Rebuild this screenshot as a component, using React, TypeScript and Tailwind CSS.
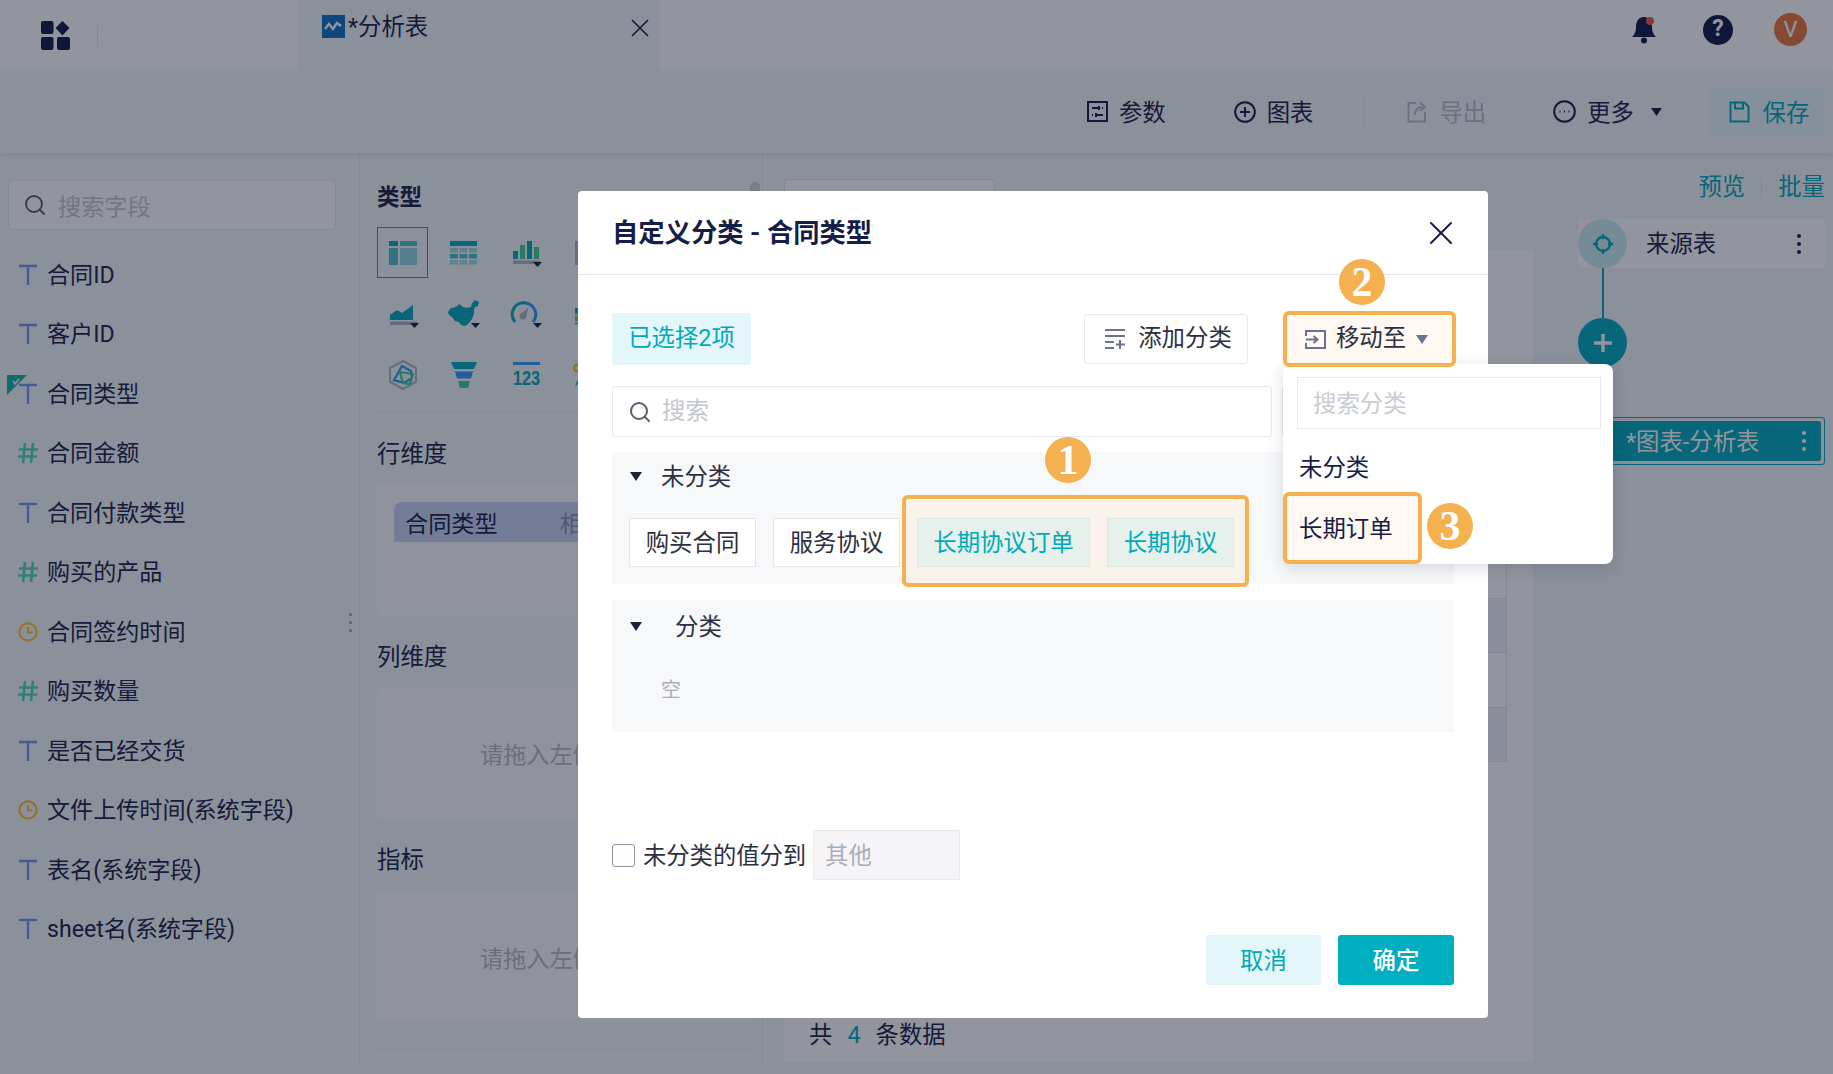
import React from 'react';
import { X, Search } from 'lucide-react';

const teal = '#00a9bc';

const fields = [
  { type: 't', name: '合同ID' },
  { type: 't', name: '客户ID' },
  { type: 't', name: '合同类型', used: true },
  { type: 'n', name: '合同金额' },
  { type: 't', name: '合同付款类型' },
  { type: 'n', name: '购买的产品' },
  { type: 'd', name: '合同签约时间' },
  { type: 'n', name: '购买数量' },
  { type: 't', name: '是否已经交货' },
  { type: 'd', name: '文件上传时间(系统字段)' },
  { type: 't', name: '表名(系统字段)' },
  { type: 't', name: 'sheet名(系统字段)' },
];

const FieldIcon = ({ type }: { type: string }) => {
  if (type === 'n') {
    return (
      <svg width="22" height="22" viewBox="0 0 22 22" fill="none" stroke="#4fd8b8" strokeWidth="2.6">
        <path d="M8 1 6 21M16 1l-2 20M2 7.500h19M1 14.500h19" />
      </svg>
    );
  }
  if (type === 'd') {
    return (
      <svg width="20" height="20" viewBox="0 0 20 20" fill="none" stroke="#ffc030" strokeWidth="2.2">
        <circle cx="10" cy="10" r="8.600" />
        <path d="M10 5v5.500h4.500" />
      </svg>
    );
  }
  return (
    <svg width="20" height="22" viewBox="0 0 20 22" fill="none" stroke="#7096f0" strokeWidth="2.4">
      <path d="M1 2h18M10 2v19" />
    </svg>
  );
};

const Caret = () => <path d="M24 24h9l-4.500 5z" fill="#161d47" />;

const ChartIcon = ({ kind }: { kind: number }) => {
  const c = teal;
  return (
    <svg width="34" height="30" viewBox="0 0 34 30">
      {kind === 0 && (
        <g transform="translate(3 3)" fill={c}>
          <rect width="9" height="5" />
          <rect x="11" width="17" height="5" opacity=".7" />
          <rect y="7" width="9" height="17" opacity=".7" />
          <rect x="11" y="7" width="17" height="17" opacity=".4" />
        </g>
      )}
      {kind === 1 && (
        <g transform="translate(3 3)" fill={c}>
          <rect width="27" height="5" />
          {[7, 13, 19].map((y, i) => (
            <g key={y} opacity={i === 1 ? 0.7 : 0.35}>
              <rect y={y} width="8" height="4.500" />
              <rect x="9.500" y={y} width="8" height="4.500" />
              <rect x="19" y={y} width="8" height="4.500" />
            </g>
          ))}
        </g>
      )}
      {kind === 2 && (
        <g>
          <rect x="4" y="13" width="5" height="8" fill={c} />
          <rect x="11" y="7" width="5" height="14" fill="#3fd08f" />
          <rect x="18" y="3" width="5" height="18" fill={c} />
          <rect x="25" y="9" width="5" height="12" fill="#3fd08f" />
          <rect x="4" y="22.500" width="27" height="3.500" fill="#aeb2c4" />
          <Caret />
        </g>
      )}
      {kind === 3 && (
        <g>
          <path d="M4 16l7-5 5 3 11-8v15H4z" fill={c} />
          <rect x="4" y="22.500" width="27" height="3.500" fill="#aeb2c4" />
          <Caret />
        </g>
      )}
      {kind === 4 && (
        <g>
          <path d="M1 13l3-4 5-1 3-3 4 3 4 1 4-1 1-4 3-3 4 2-1 4-3 1-1 3v4l-2 5-3 4-4 3-4-1-2-3-4-1-3-4-3-2z" fill={c} />
          <Caret />
        </g>
      )}
      {kind === 5 && (
        <g fill="none">
          <path d="M6.200 23A11.500 11.500 0 0 1 18 4.200" stroke={c} strokeWidth="3" />
          <path d="M18 4.200A11.500 11.500 0 0 1 23.800 23" stroke="#2f9bf5" strokeWidth="3" />
          <circle cx="14" cy="17" r="3.500" fill="#aeb2c4" />
          <path d="M12 15l8-7-4 11z" fill="#aeb2c4" />
          <Caret />
        </g>
      )}
      {kind === 6 && (
        <g fill="none">
          <path d="M17 1l13 7v14l-13 7-13-7V8z" stroke="#aeb2c4" strokeWidth="2" />
          <path d="M16 6l9 5 1 7-8 5-10-3z" stroke="#2f9bf5" strokeWidth="2.200" />
          <path d="M14 12l13 2-3 10-7-1z" stroke="#3fd08f" strokeWidth="2.200" />
        </g>
      )}
      {kind === 7 && (
        <g>
          <path d="M4 2h26l-3 7H7z" fill={c} />
          <path d="M8 11.500h18l-2 7H10z" fill="#2f9bf5" />
          <path d="M11 21h12l-2 7h-8z" fill="#3fd08f" />
        </g>
      )}
      {kind === 8 && (
        <g>
          <rect x="4" y="2" width="27" height="3" fill="#2f9bf5" />
          <text x="17.500" y="25" textAnchor="middle" fontSize="21" fontWeight="700" fill={c} fontFamily="'Liberation Sans', sans-serif" textLength="27" lengthAdjust="spacingAndGlyphs">
            123
          </text>
        </g>
      )}
      {kind === 9 && <rect x="5" y="3" width="3" height="24" fill="#aeb2c4" />}
      {kind === 10 && (
        <g>
          <rect x="5" y="9" width="6" height="5" fill={c} />
          <rect x="5" y="14" width="6" height="4" fill="#ffc030" />
          <rect x="5" y="18" width="6" height="4" fill="#3fd08f" />
          <rect x="5" y="23" width="6" height="3" fill="#aeb2c4" />
        </g>
      )}
      {kind === 11 && (
        <g>
          <circle cx="7" cy="8" r="3" fill="none" stroke="#ffc030" strokeWidth="2.500" />
          <path d="M5 27l2-6 3 0z" fill={c} />
        </g>
      )}
    </svg>
  );
};

const ToolItem = ({ icon, label, dim, caret }: { icon: React.ReactNode; label: string; dim?: boolean; caret?: boolean }) => (
  <div className={`flex items-center gap-[11px] text-[23.4px] ${dim ? 'text-[#b9bdc9]' : 'text-[#1a2145]'}`}>
    {icon}
    <span className="pt-[3px]">{label}</span>
    {caret && (
      <svg width="13" height="10" viewBox="0 0 13 10" className="ml-[5px]">
        <path d="M1 1h11L6.500 9z" fill="#161d47" />
      </svg>
    )}
  </div>
);

const Badge = ({ n, className }: { n: number; className: string }) => (
  <div
    className={`absolute z-30 flex h-[46px] w-[46px] items-center justify-center rounded-full bg-[#f5b04f] font-['Liberation_Serif',serif] text-[42px] font-bold leading-none text-white ${className}`}
  >
    {n}
  </div>
);

const Triangle = () => (
  <svg width="14" height="11" viewBox="0 0 14 11" className="shrink-0">
    <path d="M1 1h12L7 10z" fill="#1f2433" />
  </svg>
);

const Chip = ({ label, active, className }: { label: string; active?: boolean; className: string }) => (
  <div
    className={`relative z-10 flex h-[49px] items-center justify-center border pt-[2px] text-[23.4px] ${className} ${
      active ? 'border-[#dce9e4] bg-[#e5f1ea] text-[#00a9bc]' : 'border-[#e6e7ec] bg-white text-[#2d3040]'
    }`}
  >
    {label}
  </div>
);

const DropBox = ({ top }: { top: string }) => (
  <div className={`${top} flex h-[130px] w-[378px] items-center rounded-[4px] bg-[#fbfbfc] pl-[103px] pt-[4px] text-[23.2px] whitespace-nowrap text-[#b5b8c4]`}>
    请拖入左侧字段
  </div>
);

export default function App() {
  return (
    <div className="relative h-[1074px] w-[1833px] overflow-hidden bg-[#f0f7f9] font-[Roboto,'Noto_Sans_CJK_SC',sans-serif] text-[#1a2145]">
      {/* top bar */}
      <div className="flex h-[71px] bg-white">
        <div className="flex w-[297px] items-center pl-[41px]">
          <svg width="29" height="29" viewBox="0 0 29 29" fill="#0e1848">
            <rect width="12.500" height="13" rx="2" />
            <path d="M21.500 0l7 7-7 7.500-7-7.500z" />
            <rect y="16" width="12.500" height="13" rx="2" />
            <rect x="16" y="16" width="13" height="13" rx="2" />
          </svg>
          <div className="ml-[27px] h-[20px] w-px bg-[#e4e6ec]" />
        </div>
        <div className="flex w-[363px] items-start bg-[#f0f7f9] pl-[25px] pt-[12px]">
          <svg width="23" height="23" viewBox="0 0 23 23" className="mt-[3px]">
            <rect width="23" height="23" fill="#0f6fc0" />
            <path d="M3 14l4-5 4 5 4-6 4 3" fill="none" stroke="#fff" strokeWidth="2.400" />
          </svg>
          <span className="ml-[3px] text-[23.4px] leading-[30px]">*分析表</span>
          <X className="ml-auto mr-[5px] mt-[1px] h-[30px] w-[30px]" strokeWidth={1.4} />
        </div>
        <div className="ml-auto flex items-center pb-[12px] pr-[26px]">
          <svg width="26" height="29" viewBox="0 0 26 29" fill="#0e1848">
            <path d="M13 2c-5 0-8 4-8 10 0 4-1 7-4 10h24c-3-3-4-6-4-10 0-6-3-10-8-10z" />
            <circle cx="13" cy="25.500" r="3" />
            <circle cx="19" cy="6" r="4" fill="#ea5b50" />
          </svg>
          <div className="ml-[46px] flex h-[30px] w-[30px] items-center justify-center rounded-full bg-[#0e1848] text-[23px] font-bold text-white">
            ?
          </div>
          <div className="ml-[41px] flex h-[33px] w-[33px] items-center justify-center rounded-full bg-[#e8773f] text-[22px] text-white">
            V
          </div>
        </div>
      </div>

      {/* toolbar */}
      <div className="relative z-10 flex h-[82px] items-center justify-end bg-[#f0f7f9] pr-[8px] shadow-[0_2px_6px_rgba(30,40,70,0.08)]">
        <ToolItem
          label="参数"
          icon={
            <svg width="21" height="21" viewBox="0 0 21 21" fill="none" stroke="#161d47" strokeWidth="2">
              <rect x="1" y="1" width="19" height="19" />
              <path d="M5 7h7M15 7h1M5 14h1M9 14h7" />
              <path d="M12 5v4M9 12v4" />
            </svg>
          }
        />
        <div className="ml-[68px]">
          <ToolItem
            label="图表"
            icon={
              <svg width="22" height="22" viewBox="0 0 22 22" fill="none" stroke="#161d47" strokeWidth="2">
                <circle cx="11" cy="11" r="9.800" />
                <path d="M11 6v10M6 11h10" />
              </svg>
            }
          />
        </div>
        <div className="ml-[50px] h-[30px] w-px bg-[#e4e8ec]" />
        <div className="ml-[43px]">
          <ToolItem
            dim
            label="导出"
            icon={
              <svg width="21" height="23" viewBox="0 0 21 23" fill="none" stroke="#b9bdc9" strokeWidth="2">
                <path d="M9 3H1.500v18.500H18V12" />
                <path d="M8 15c0-5 3-8 8-8M13 2.500 18 7l-5 4" />
              </svg>
            }
          />
        </div>
        <div className="ml-[67px]">
          <ToolItem
            caret
            label="更多"
            icon={
              <svg width="23" height="23" viewBox="0 0 23 23" fill="none" stroke="#161d47" strokeWidth="2">
                <circle cx="11.500" cy="11.500" r="10.300" />
                <path d="M6.500 11.500h1M11 11.500h1M15.500 11.500h1" />
              </svg>
            }
          />
        </div>
        <div className="ml-[46px] flex h-[47px] w-[116px] items-center justify-center gap-[13px] rounded-[3px] bg-[#e3f6f9] pl-[4px] text-[23.4px] text-[#00a9bc]">
          <svg width="21" height="22" viewBox="0 0 21 22" fill="none" stroke="#00a9bc" strokeWidth="2">
            <path d="M1.500 1.500h14l4 4v15h-18z" />
            <path d="M6 1.500v6h8v-6" />
          </svg>
          <span className="pt-[3px]">保存</span>
        </div>
      </div>

      {/* workspace */}
      <div className="flex h-[921px]">
        {/* field list */}
        <div className="relative h-[911px] w-[360px] shrink-0 border-r border-[#e5e9ee] pl-[8px] pr-[23px] pt-[27px]">
          <div className="flex h-[50px] items-center gap-[11px] rounded-[4px] border border-[#e8ebf0] bg-white pl-[14px] text-[23.2px] text-[#c3c6d0]">
            <Search className="h-[24px] w-[24px] text-[#5a6070]" strokeWidth={2} />
            <span className="pt-[4px]">搜索字段</span>
          </div>
          <div className="mt-[15px]">
            {fields.map((f) => (
              <div key={f.name} className="relative flex h-[59.5px] items-center whitespace-nowrap text-[23.1px]">
                {f.used && (
                  <svg width="20" height="20" viewBox="0 0 20 20" className="absolute -left-px top-[11px]">
                    <path d="M0 0h20L0 20z" fill="#0fb8a0" />
                    <path d="M6 6l2 3 4-5" fill="none" stroke="#fff" strokeWidth="1.500" />
                  </svg>
                )}
                <div className="flex w-[39px] justify-center">
                  <FieldIcon type={f.type} />
                </div>
                <span className="pt-[3px]">{f.name}</span>
              </div>
            ))}
          </div>
          <div className="absolute left-[349px] top-[460px] flex flex-col gap-[5px]">
            <div className="h-[3px] w-[3px] rounded-full bg-[#9a9eae]" />
            <div className="h-[3px] w-[3px] rounded-full bg-[#9a9eae]" />
            <div className="h-[3px] w-[3px] rounded-full bg-[#9a9eae]" />
          </div>
        </div>

        {/* chart config */}
        <div className="relative h-[911px] w-[403px] shrink-0 border-r border-[#e5e9ee] pl-[17px] pt-[28px]">
          <div className="h-[30px] pt-[1px] text-[22.5px] font-bold leading-[30px]">类型</div>
          <div className="mt-[16px] grid w-[246px] grid-cols-4 gap-y-[10px]">
            {[0, 1, 2, 9, 3, 4, 5, 10, 6, 7, 8, 11].map((k) => (
              <div
                key={k}
                className={`flex h-[51px] w-[51px] items-center justify-center ${k === 0 ? 'border border-[#00a9bc]' : ''}`}
              >
                <ChartIcon kind={k} />
              </div>
            ))}
          </div>
          <div className="mr-[8px] mt-[11px] border-t border-[#e5e9ee]" />
          <div className="mt-[27px] h-[30px] text-[23.4px] leading-[30px]">行维度</div>
          <div className="mt-[16px] h-[131px] w-[378px] rounded-[4px] bg-[#fbfbfc] pl-[17px] pt-[17px]">
            <div className="flex h-[40px] w-[360px] items-center rounded-tl-[8px] bg-[#c5d4f2] pl-[11px] pt-[4px] text-[23.2px]">
              合同类型
              <span className="ml-[62px] text-[#8a93ad]">相</span>
            </div>
          </div>
          <div className="mt-[26px] h-[30px] text-[23.4px] leading-[30px]">列维度</div>
          <DropBox top="mt-[16px]" />
          <div className="mt-[27px] h-[30px] text-[23.4px] leading-[30px]">指标</div>
          <DropBox top="mt-[17px]" />
          <div className="mr-[8px] mt-[27px] border-t border-[#e5e9ee]" />
          <div className="absolute left-[390px] top-[29px] h-[60px] w-[10px] rounded-full bg-[#d0d3da]" />
        </div>

        {/* preview area */}
        <div className="w-[790px] shrink-0 pl-[21px] pr-[20px] pt-[26px]">
          <div className="h-[71px] w-[211px] rounded-t-[4px] border border-b-0 border-[#dfe3ea] bg-white" />
          <div className="relative h-[812px] bg-white">
            <div className="ml-[25px] mr-[26px] pt-[294px]">
              {[0, 1, 2, 3].map((i) => (
                <div
                  key={i}
                  className={`h-[54.5px] border-b border-r border-[#e3e6ec] ${i % 2 === 0 ? 'bg-white' : 'bg-[#eef1f7]'}`}
                />
              ))}
            </div>
            <div className="absolute bottom-[9px] left-[25px] flex items-center text-[23.4px]">
              共<span className="mx-[15px] text-[#00a9bc]">4</span>条数据
            </div>
          </div>
        </div>

        {/* flow panel */}
        <div className="flex-1 pl-[25px] pr-[8px]">
          <div className="flex h-[66px] items-center justify-end pt-[3px] text-[23.4px] text-[#00a9bc]">
            预览
            <div className="mx-[16px] h-[20px] w-px bg-[#dde3e8]" />
            批量
          </div>
          <div className="flex h-[49px] items-center rounded-[3px] bg-white pr-[24px]">
            <div className="flex h-[49px] w-[49px] items-center justify-center rounded-full bg-[#c9eef2]">
              <svg width="22" height="22" viewBox="0 0 22 22" fill="none" stroke="#00a9bc" strokeWidth="2.400">
                <circle cx="11" cy="11" r="7" />
                <path d="M11 1v5M11 16v5M1 11h5M16 11h5" />
              </svg>
            </div>
            <span className="ml-[19px] pt-[3px] text-[23.4px]">来源表</span>
            <div className="ml-auto flex flex-col gap-[4px]">
              <div className="h-[4px] w-[4px] rounded-full bg-[#161d47]" />
              <div className="h-[4px] w-[4px] rounded-full bg-[#161d47]" />
              <div className="h-[4px] w-[4px] rounded-full bg-[#161d47]" />
            </div>
          </div>
          <div className="ml-[24px] h-[50px] w-[2px] bg-[#00a9bc]" />
          <div className="flex h-[49px] w-[49px] items-center justify-center rounded-full bg-[#00a9bc]">
            <svg width="22" height="22" viewBox="0 0 22 22" stroke="#fff" strokeWidth="3.400">
              <path d="M11 2v18M2 11h18" />
            </svg>
          </div>
          <div className="mt-[50px] h-[48px] rounded-[3px] border border-[#00a9bc] p-[3px]">
            <div className="flex h-full items-center rounded-[3px] bg-[#00a9bc] pl-[44px] pr-[15px] text-[23.4px] text-white">
              <span className="pt-[3px]">*图表-分析表</span>
              <div className="ml-auto flex flex-col gap-[4px]">
                <div className="h-[4px] w-[4px] rounded-full bg-white" />
                <div className="h-[4px] w-[4px] rounded-full bg-white" />
                <div className="h-[4px] w-[4px] rounded-full bg-white" />
              </div>
            </div>
          </div>
        </div>
      </div>

      {/* mask */}
      <div className="absolute inset-0 z-20 bg-[#0f1428]/45" />

      {/* dialog */}
      <div className="absolute left-[578px] top-[191px] z-30 h-[827px] w-[910px] rounded-[4px] bg-white">
        <div className="flex h-[84px] items-center justify-between border-b border-[#e4e5eb] pl-[34px] pr-[27px]">
          <h3 className="pt-[3px] text-[26.3px] font-bold text-[#161d47]">自定义分类 - 合同类型</h3>
          <X className="h-[40px] w-[40px] text-[#161d47]" strokeWidth={1.2} />
        </div>

        <div className="px-[34px]">
          <div className="mt-[38px] flex h-[52px] items-center">
            <div className="flex h-[52px] w-[139px] items-center justify-center rounded-[3px] bg-[#e3f6f9] text-[23.4px] text-[#00a9bc]">
              已选择2项
            </div>
            <div className="ml-auto flex h-[50px] w-[164px] items-center justify-center gap-[12px] rounded-[3px] border border-[#e9eaef] pl-[4px] text-[23.4px] text-[#2d3040]">
              <svg width="22" height="22" viewBox="0 0 22 22" fill="none" stroke="#6d7290" strokeWidth="2.200">
                <path d="M1 2h20M1 8h20M1 14h9M1 20h9M16 12v9M12 16.500h9" />
              </svg>
              添加分类
            </div>
            <div className="relative z-30 -mr-[2px] ml-[35px] flex h-[56px] w-[173px] items-center justify-center gap-[10px] rounded-[6px] border-[4px] border-[#f5b04f] bg-[#fff8f3] pr-[6px] text-[23.4px] text-[#2d3040]">
              <svg width="21" height="19" viewBox="0 0 21 19" fill="none" stroke="#6d7290" strokeWidth="2">
                <path d="M1 6V1h19v17H1v-5" />
                <path d="M1 9.500h11M8.500 6l4 3.500-4 3.500" />
              </svg>
              移动至
              <svg width="12" height="9" viewBox="0 0 12 9">
                <path d="M0 0h12L6 9z" fill="#6d7290" />
              </svg>
            </div>
          </div>

          <div className="mt-[21px] flex h-[51px] gap-[10px]">
            <div className="flex w-[660px] items-center gap-[10px] rounded-[3px] border border-[#e9eaef] pl-[15px] text-[23.4px] text-[#c4c6d0]">
              <Search className="h-[24px] w-[24px] text-[#5a6070]" strokeWidth={2} />
              搜索
            </div>
            <div className="w-[172px] rounded-[3px] border border-[#e9eaef]" />
          </div>

          <div className="relative mt-[15px] h-[132px] bg-[#f7f8fa] pl-[17px]">
            <div className="flex h-[48px] items-center gap-[18px] text-[23.4px] text-[#2d3040]">
              <Triangle />
              <span className="pt-[3px]">未分类</span>
            </div>
            <div className="mt-[18px] flex gap-[17px]">
              <Chip label="购买合同" className="w-[127px]" />
              <Chip label="服务协议" className="w-[127px]" />
              <Chip label="长期协议订单" active className="w-[173px]" />
              <Chip label="长期协议" active className="w-[127px]" />
            </div>
            <div className="absolute left-[290px] top-[43px] h-[92px] w-[347px] rounded-[6px] border-[4px] border-[#f5b04f] bg-[#f9f3ec]" />
          </div>

          <div className="mt-[16px] h-[132px] bg-[#f7f8fa] pl-[17px]">
            <div className="flex h-[52px] items-center gap-[32px] text-[23.4px] text-[#2d3040]">
              <Triangle />
              <span className="pt-[3px]">分类</span>
            </div>
            <div className="ml-[32px] mt-[25px] text-[20px] leading-[26px] text-[#a9adba]">空</div>
          </div>

          <div className="mt-[98px] flex h-[50px] items-center">
            <div className="h-[23px] w-[23px] rounded-[3px] border border-[#8e93a6] bg-white" />
            <span className="ml-[8px] pt-[3px] text-[23.3px] text-[#2d3040]">未分类的值分到</span>
            <div className="ml-[7px] flex h-[50px] w-[147px] items-center border border-[#e9eaef] bg-[#f5f5f7] pl-[11px] pt-[3px] text-[23.4px] text-[#a9adba]">
              其他
            </div>
          </div>

          <div className="mt-[55px] flex justify-end gap-[17px]">
            <div className="flex h-[50px] w-[115px] items-center justify-center rounded-[3px] bg-[#e3f6f9] pt-[3px] text-[23.4px] text-[#00a9bc]">
              取消
            </div>
            <div className="flex h-[50px] w-[116px] items-center justify-center rounded-[3px] bg-[#00aec1] pt-[3px] text-[23.4px] font-medium text-white">
              确定
            </div>
          </div>
        </div>

        {/* move-to menu */}
        <div className="absolute left-[705px] top-[173px] z-20 h-[200px] w-[330px] rounded-[8px] bg-white pt-[13px] shadow-[0_4px_16px_rgba(20,30,60,0.16)]">
          <div className="mx-[14px] flex h-[52px] w-[304px] items-center border border-[#e9eaef] pl-[15px] pt-[4px] text-[23.4px] text-[#c9cbd5]">
            搜索分类
          </div>
          <div className="flex h-[63px] items-center pl-[16px] pt-[16px] text-[23.4px] text-[#161d47]">未分类</div>
          <div className="flex h-[72px] w-[139px] items-center rounded-[6px] border-[4px] border-[#f5b04f] bg-[#fff8f3] pl-[12px] pt-[3px] text-[23.4px] text-[#161d47]">
            长期订单
          </div>
        </div>

        <Badge n={1} className="left-[467px] top-[246px]" />
        <Badge n={2} className="left-[761px] top-[68px]" />
        <Badge n={3} className="left-[849px] top-[312px]" />
      </div>
    </div>
  );
}
